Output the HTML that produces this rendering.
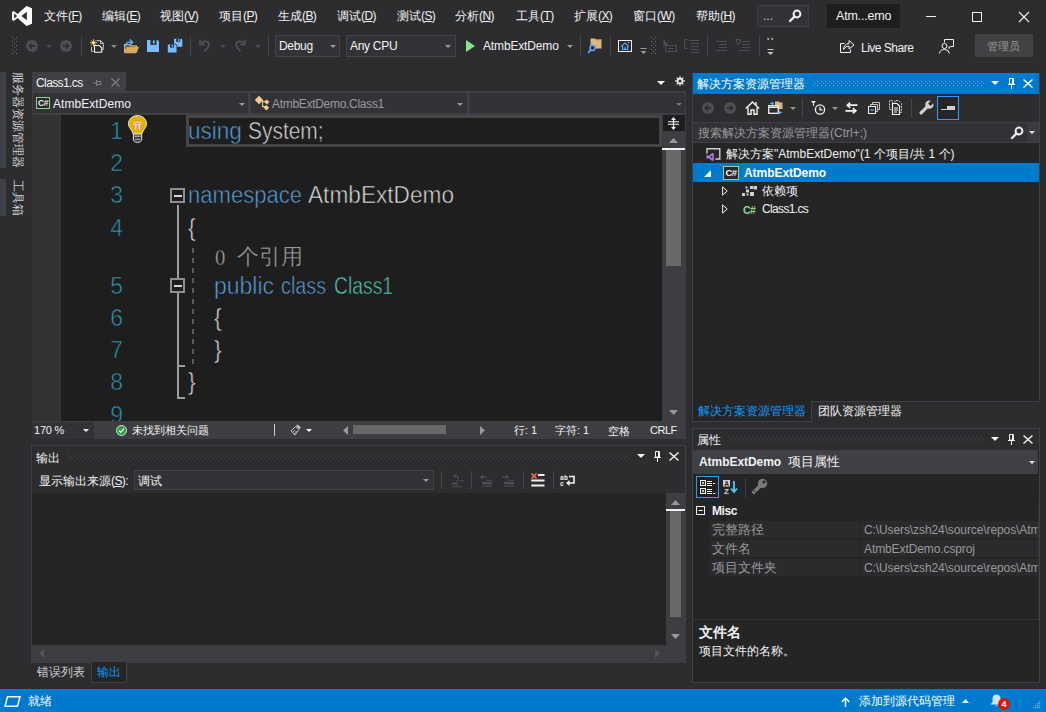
<!DOCTYPE html>
<html lang="zh">
<head>
<meta charset="utf-8">
<title>AtmbExtDemo - Microsoft Visual Studio</title>
<style>
*{box-sizing:border-box;margin:0;padding:0}
html,body{width:1046px;height:712px;overflow:hidden;background:#2d2d30}
body{position:relative;font-family:"Liberation Sans",sans-serif;font-size:12px;color:#f1f1f1;line-height:1}
.a{position:absolute}
.t{position:absolute;white-space:nowrap;line-height:16px;height:16px}
.ls{letter-spacing:-0.3px}
.cj{display:inline-block;white-space:nowrap;overflow:visible}
.mp{letter-spacing:-0.6px}
.u{text-decoration:underline;text-underline-offset:1px}
svg{position:absolute;overflow:visible}
.dots{background:conic-gradient(at 1px 1px,transparent 75%,#6a6a6e 0) 0 0/4px 4px,conic-gradient(at 1px 1px,transparent 75%,#6a6a6e 0) 2px 2px/4px 4px}
.dotsd{background:conic-gradient(at 1px 1px,transparent 75%,#4b4b50 0) 0 0/4px 4px,conic-gradient(at 1px 1px,transparent 75%,#4b4b50 0) 2px 2px/4px 4px}
.dotsb{background:conic-gradient(at 1px 1px,transparent 75%,#5eaee3 0) 0 0/4px 4px,conic-gradient(at 1px 1px,transparent 75%,#5eaee3 0) 2px 2px/4px 4px}
.code{position:absolute;white-space:nowrap;font-size:23px;line-height:32px;height:32px;color:#dcdcdc;transform-origin:0 50%;-webkit-text-stroke:0.55px #1e1e1e}
.ln{position:absolute;font-size:23px;line-height:32px;height:32px;color:#2b91af;width:30px;text-align:right;-webkit-text-stroke:0.55px #1e1e1e}
.kw{color:#569cd6}.ty{color:#4ec9b0}
</style>
</head>
<body>

<!-- ===== TITLE / MENU BAR ===== -->
<div id="menubar" class="a" style="left:0;top:0;width:1046px;height:30px">
<!-- VS logo -->
<svg style="left:12px;top:6px" width="20" height="20" viewBox="0 0 20 20"><path fill="#fff" fill-rule="evenodd" d="M14.6 0 L20 2.3 V17.7 L14.6 20 L5.4 11.9 L1.8 14.9 L0 13.9 V6.1 L1.8 5.1 L5.4 8.1 Z M14.8 5.8 L9.4 10 L14.8 14.2 Z M2.1 7.3 V12.7 L5 10 Z"/></svg>
<span class="t" style="left:44px;top:8px"><span class="cj" style="width:24px">文件</span><span class="mp">(<span class="u">F</span>)</span></span>
<span class="t" style="left:102px;top:8px"><span class="cj" style="width:24px">编辑</span><span class="mp">(<span class="u">E</span>)</span></span>
<span class="t" style="left:160px;top:8px"><span class="cj" style="width:24px">视图</span><span class="mp">(<span class="u">V</span>)</span></span>
<span class="t" style="left:219px;top:8px"><span class="cj" style="width:24px">项目</span><span class="mp">(<span class="u">P</span>)</span></span>
<span class="t" style="left:278px;top:8px"><span class="cj" style="width:24px">生成</span><span class="mp">(<span class="u">B</span>)</span></span>
<span class="t" style="left:337px;top:8px"><span class="cj" style="width:24px">调试</span><span class="mp">(<span class="u">D</span>)</span></span>
<span class="t" style="left:397px;top:8px"><span class="cj" style="width:24px">测试</span><span class="mp">(<span class="u">S</span>)</span></span>
<span class="t" style="left:455px;top:8px"><span class="cj" style="width:24px">分析</span><span class="mp">(<span class="u">N</span>)</span></span>
<span class="t" style="left:516px;top:8px"><span class="cj" style="width:24px">工具</span><span class="mp">(<span class="u">T</span>)</span></span>
<span class="t" style="left:574px;top:8px"><span class="cj" style="width:24px">扩展</span><span class="mp">(<span class="u">X</span>)</span></span>
<span class="t" style="left:633px;top:8px"><span class="cj" style="width:24px">窗口</span><span class="mp">(<span class="u">W</span>)</span></span>
<span class="t" style="left:696px;top:8px"><span class="cj" style="width:24px">帮助</span><span class="mp">(<span class="u">H</span>)</span></span>
<!-- search box -->
<div class="a" style="left:757px;top:5px;width:52px;height:22px;background:#333337;border:1px solid #3f3f46"></div>
<span class="t" style="left:763px;top:8px;color:#c8c8c8">...</span>
<svg style="left:789px;top:9px" width="13" height="13" viewBox="0 0 13 13"><circle cx="8" cy="5" r="3.4" fill="none" stroke="#f1f1f1" stroke-width="2"/><path d="M5.4 7.6 L1 12" stroke="#f1f1f1" stroke-width="2.4" stroke-linecap="round"/></svg>
<!-- title label -->
<div class="a" style="left:827px;top:4px;width:73px;height:24px;background:#1e1e1e"></div>
<span class="t" style="left:836px;top:8px;font-size:12.5px;letter-spacing:-0.2px">Atm...emo</span>
<!-- window buttons -->
<div class="a" style="left:926px;top:16px;width:10px;height:1px;background:#f1f1f1"></div>
<div class="a" style="left:972px;top:12px;width:10px;height:10px;border:1px solid #f1f1f1"></div>
<svg style="left:1019px;top:12px" width="10" height="10" viewBox="0 0 10 10"><path d="M0 0 L10 10 M10 0 L0 10" stroke="#f1f1f1" stroke-width="1.1"/></svg>
</div>

<!-- ===== TOOLBAR ===== -->
<div id="toolbar" class="a" style="left:0;top:30px;width:1046px;height:32px">
<!-- grip -->
<div class="a dots" style="left:12px;top:7px;width:5px;height:17px"></div>
<!-- back / forward (disabled) -->
<svg style="left:26px;top:10px" width="12" height="12" viewBox="0 0 12 12"><circle cx="6" cy="6" r="6" fill="#4d4d52"/><path d="M9 6 H3.6 M5.8 3.6 L3.4 6 L5.8 8.4" stroke="#2d2d30" stroke-width="1.5" fill="none"/></svg>
<svg style="left:46px;top:15px" width="6" height="3" viewBox="0 0 6 3"><path d="M0 0 H6 L3 3 Z" fill="#4d4d52"/></svg>
<svg style="left:60px;top:10px" width="12" height="12" viewBox="0 0 12 12"><circle cx="6" cy="6" r="6" fill="#4d4d52"/><path d="M3 6 H8.4 M6.2 3.6 L8.6 6 L6.2 8.4" stroke="#2d2d30" stroke-width="1.5" fill="none"/></svg>
<div class="a" style="left:81px;top:6px;width:1px;height:20px;background:#46464a"></div>
<!-- new project -->
<svg style="left:89px;top:8px" width="16" height="16" viewBox="0 0 16 16"><path d="M7.5 2.7 H11.8 L14.3 5.2 V11.5 H13" fill="none" stroke="#c8c8c8" stroke-width="1"/><path d="M11.6 2.9 V5.4 H14.1" fill="none" stroke="#c8c8c8" stroke-width="1"/><path d="M5.5 7.5 H10.4 L12.7 9.8 V14.3 H5.5 Z" fill="#2d2d30" stroke="#f1f1f1" stroke-width="1.1"/><path d="M2.5 8.7 V13.4 H4.3" fill="none" stroke="#c8c8c8" stroke-width="1"/><path d="M4.5 1.2 V8.4 M0.9 4.8 H8.1 M2 2.3 L7 7.3 M7 2.3 L2 7.3" stroke="#f0b45a" stroke-width="1"/><circle cx="4.5" cy="4.8" r="1.3" fill="#fff3d6"/></svg>
<svg style="left:111px;top:15px" width="6" height="3" viewBox="0 0 6 3"><path d="M0 0 H6 L3 3 Z" fill="#8a8a8a"/></svg>
<!-- open -->
<svg style="left:124px;top:8px" width="15" height="16" viewBox="0 0 15 16"><path d="M0.6 14.5 V6.6 H4.8 L6 7.8 H12.4 V9.2" fill="none" stroke="#e0b36a" stroke-width="1.2"/><path d="M2.6 9.2 H14.4 L12.2 14.8 H0.5 Z" fill="#d9a85a" stroke="#e6bc78" stroke-width="0.8"/><path d="M1.9 8.6 Q1.4 4.3 5.2 4.3 H8" fill="none" stroke="#55aaff" stroke-width="1.6"/><path d="M5.8 1.5 L8.6 4.3 L5.8 7.1" fill="none" stroke="#55aaff" stroke-width="1.6"/></svg>
<!-- save -->
<svg style="left:147px;top:10px" width="12" height="12" viewBox="0 0 12 12"><path d="M0 0 H10.6 L12 1.4 V12 H0 Z" fill="#75beff"/><rect x="3.5" y="0" width="6" height="4.8" fill="#2d2d30"/><rect x="5.9" y="0.5" width="1.8" height="3" fill="#75beff"/></svg>
<!-- save all -->
<svg style="left:167px;top:8px" width="16" height="15" viewBox="0 0 16 15"><path d="M7 0.8 H14.3 L15.3 1.8 V8.7 H7 Z" fill="#75beff"/><rect x="9.2" y="0.8" width="4" height="3" fill="#2d2d30"/><rect x="11" y="1.2" width="1.2" height="1.9" fill="#75beff"/><path d="M0.8 6.6 H8.5 L9.5 7.6 V14.5 H0.8 Z" fill="#75beff" stroke="#2d2d30" stroke-width="1.6" paint-order="stroke"/><rect x="3" y="6.6" width="4" height="3" fill="#2d2d30"/><rect x="4.8" y="7" width="1.2" height="1.9" fill="#75beff"/></svg>
<div class="a" style="left:190px;top:6px;width:1px;height:20px;background:#46464a"></div>
<!-- undo / redo (disabled) -->
<svg style="left:199px;top:9px" width="12" height="13" viewBox="0 0 12 13"><path d="M1 0.5 V5.5 H6" fill="none" stroke="#4d4d52" stroke-width="1.8"/><path d="M1.5 5 Q5 0.8 8.6 3 Q11.5 5.5 8.5 9 L5.5 12.3" fill="none" stroke="#4d4d52" stroke-width="1.9"/></svg>
<svg style="left:220px;top:15px" width="6" height="3" viewBox="0 0 6 3"><path d="M0 0 H6 L3 3 Z" fill="#4d4d52"/></svg>
<svg style="left:234px;top:9px" width="12" height="13" viewBox="0 0 12 13"><path d="M11 0.5 V5.5 H6" fill="none" stroke="#4d4d52" stroke-width="1.8"/><path d="M10.5 5 Q7 0.8 3.4 3 Q0.5 5.5 3.5 9 L6.5 12.3" fill="none" stroke="#4d4d52" stroke-width="1.9"/></svg>
<svg style="left:255px;top:15px" width="6" height="3" viewBox="0 0 6 3"><path d="M0 0 H6 L3 3 Z" fill="#4d4d52"/></svg>
<div class="a" style="left:268px;top:6px;width:1px;height:20px;background:#46464a"></div>
<!-- Debug combo -->
<div class="a" style="left:275px;top:5px;width:65px;height:22px;background:#333337;border:1px solid #434346"></div>
<span class="t ls" style="left:279px;top:8px">Debug</span>
<svg style="left:330px;top:15px" width="6" height="3" viewBox="0 0 6 3"><path d="M0 0 H6 L3 3 Z" fill="#999"/></svg>
<!-- Any CPU combo -->
<div class="a" style="left:346px;top:5px;width:110px;height:22px;background:#333337;border:1px solid #434346"></div>
<span class="t ls" style="left:350px;top:8px">Any CPU</span>
<svg style="left:445px;top:15px" width="6" height="3" viewBox="0 0 6 3"><path d="M0 0 H6 L3 3 Z" fill="#999"/></svg>
<!-- start -->
<svg style="left:466px;top:10px" width="9" height="12" viewBox="0 0 9 12"><path d="M0 0 L9 6 L0 12 Z" fill="#8ae28a"/></svg>
<span class="t" style="left:483px;top:8px;letter-spacing:-0.15px">AtmbExtDemo</span>
<svg style="left:567px;top:15px" width="6" height="3" viewBox="0 0 6 3"><path d="M0 0 H6 L3 3 Z" fill="#999"/></svg>
<div class="a" style="left:580px;top:6px;width:1px;height:20px;background:#46464a"></div>
<!-- find in files -->
<svg style="left:587px;top:7px" width="15" height="16" viewBox="0 0 15 16"><path d="M3.5 1.5 H8 L9 2.5 H14.5 V11.5 H3.5 Z" fill="#dcb67a"/><path d="M9 2.8 H14.5" stroke="#b89455" stroke-width="0.8"/><circle cx="5.6" cy="10.8" r="2.6" fill="#2d2d30" stroke="#55aaff" stroke-width="1.5"/><path d="M3.7 12.8 L1.5 15.3" stroke="#55aaff" stroke-width="1.8" stroke-linecap="round"/></svg>
<div class="a" style="left:610px;top:6px;width:1px;height:20px;background:#46464a"></div>
<!-- window icon -->
<svg style="left:618px;top:10px" width="14" height="12" viewBox="0 0 14 12"><rect x="0.5" y="0.5" width="13" height="11" fill="none" stroke="#f1f1f1" stroke-width="1"/><path d="M3.2 6.4 L7 3 L10.8 6.4 M4.5 6 V9.5 H9.5 V6" fill="none" stroke="#55aaff" stroke-width="1.2"/><rect x="6.3" y="7.2" width="1.5" height="2.3" fill="#55aaff"/><path d="M10 2.5 H12" stroke="#f1f1f1" stroke-width="1" stroke-dasharray="1 1"/></svg>
<svg style="left:640px;top:18px" width="7" height="7" viewBox="0 0 7 7"><path d="M0.5 0.5 H6.5" stroke="#999" stroke-width="1"/><path d="M0.5 3 H6.5 L3.5 6 Z" fill="#999"/></svg>
<!-- grip -->
<div class="a dots" style="left:651px;top:7px;width:5px;height:17px"></div>
<!-- disabled icons -->
<svg style="left:663px;top:9px" width="14" height="14" viewBox="0 0 14 14"><path d="M0.5 0.5 L0.5 7.5 L2.5 5.8 L4 8.5 L5 8 L3.6 5.4 H6 Z" fill="#4d4d52"/><rect x="2.5" y="6.5" width="11" height="6" fill="#2d2d30" stroke="#4d4d52" stroke-width="1"/><path d="M5 9.5 H11" stroke="#4d4d52" stroke-width="1"/></svg>
<svg style="left:684px;top:9px" width="15" height="14" viewBox="0 0 15 14"><path d="M3.5 0.5 H0.5 V9.5 H3.5" fill="none" stroke="#4d4d52" stroke-width="1"/><path d="M5 1.5 H15 M7 4.5 H15 M7 7.5 H15 M7 10.5 H15 M7 13.5 H15" stroke="#4d4d52" stroke-width="1"/></svg>
<div class="a" style="left:707px;top:6px;width:1px;height:20px;background:#46464a"></div>
<svg style="left:716px;top:11px" width="11" height="10" viewBox="0 0 11 10"><path d="M0 0.5 H11 M3 3.5 H11 M3 6.5 H11 M0 9.5 H11" stroke="#4d4d52" stroke-width="1"/></svg>
<svg style="left:736px;top:9px" width="14" height="12" viewBox="0 0 14 12"><path d="M0.5 3.5 V0.5 H3 Q4.5 0.5 4.5 2 Q4.5 3.5 2.5 4.5 L1 6" fill="none" stroke="#4d4d52" stroke-width="1.2"/><path d="M6 2.5 H14 M6 5.5 H14 M6 8.5 H14 M3 11.5 H14" stroke="#4d4d52" stroke-width="1"/></svg>
<div class="a" style="left:759px;top:6px;width:1px;height:20px;background:#46464a"></div>
<!-- overflow -->
<svg style="left:767px;top:7px" width="8" height="18" viewBox="0 0 8 18"><path d="M0.5 0.5 L2.5 2 L0.5 3.5 Z M4.5 0.5 L6.5 2 L4.5 3.5 Z" fill="#c8c8c8"/><path d="M0.5 12.5 H6.5" stroke="#c8c8c8" stroke-width="1"/><path d="M0.5 15 H6.5 L3.5 18 Z" fill="#c8c8c8"/></svg>
<!-- live share -->
<svg style="left:840px;top:9px" width="15" height="14" viewBox="0 0 15 14"><path d="M4.5 4.5 H0.5 V13.5 H10.5 V10.5" fill="none" stroke="#f1f1f1" stroke-width="1"/><path d="M3.5 10.5 Q4 5 9 4.5 V1.5 L14 6 L9 10 V7 Q5.5 7 3.5 10.5 Z" fill="none" stroke="#f1f1f1" stroke-width="1" stroke-linejoin="round"/></svg>
<span class="t" style="left:861px;top:10px;letter-spacing:-0.5px">Live Share</span>
<!-- feedback -->
<svg style="left:939px;top:9px" width="15" height="15" viewBox="0 0 15 15"><path d="M5.5 3.5 V0.5 H14.5 V7.5 H11.5 L10 9.5 V7.5" fill="none" stroke="#f1f1f1" stroke-width="1"/><circle cx="5.5" cy="7" r="2.5" fill="none" stroke="#f1f1f1" stroke-width="1"/><path d="M0.5 14.5 Q0.8 10.5 5.5 10.5 Q10 10.5 10.5 14.5" fill="none" stroke="#f1f1f1" stroke-width="1"/></svg>
<!-- admin -->
<div class="a" style="left:975px;top:4px;width:58px;height:23px;background:#424245"></div>
<span class="t" style="left:987px;top:8px;color:#999;font-size:11px">管理员</span>
</div>

<!-- ===== LEFT AUTOHIDE STRIP ===== -->
<div id="leftstrip" class="a" style="left:0;top:72px;width:28px;height:612px">
<div class="a" style="left:0;top:0;width:6px;height:96px;background:#3f3f46"></div>
<div class="a" style="left:0;top:107px;width:6px;height:37px;background:#3f3f46"></div>
<span class="t" style="left:26px;top:0;transform-origin:0 0;transform:rotate(90deg);color:#d0d0d0">服务器资源管理器</span>
<span class="t" style="left:26px;top:108px;transform-origin:0 0;transform:rotate(90deg);color:#d0d0d0">工具箱</span>
</div>

<!-- ===== EDITOR GROUP ===== -->
<div id="editor" class="a" style="left:32px;top:72px;width:654px;height:368px">
<!-- tab -->
<div class="a" style="left:0;top:0;width:94px;height:20px;background:#3f3f46"></div>
<span class="t" style="left:4px;top:3px;letter-spacing:-0.6px">Class1.cs</span>
<svg style="left:61px;top:7px" width="9" height="8" viewBox="0 0 9 8"><path d="M0 4 H3.5 M3.5 1 V7 M3.5 2.5 H8 V5.5 H3.5" fill="none" stroke="#7d7d82" stroke-width="1"/></svg>
<svg style="left:79px;top:6px" width="9" height="9" viewBox="0 0 9 9"><path d="M0.5 0.5 L8.5 8.5 M8.5 0.5 L0.5 8.5" stroke="#7d7d82" stroke-width="1.2"/></svg>
<svg style="left:625px;top:9px" width="8" height="4" viewBox="0 0 8 4"><path d="M0 0 H8 L4 4 Z" fill="#f1f1f1"/></svg>
<svg style="left:643px;top:4px" width="10" height="10" viewBox="0 0 11 11"><g fill="none" stroke="#f1f1f1"><circle cx="5.5" cy="5.5" r="2.6" stroke-width="1.7"/><path d="M5.5 0.3 V2.2 M5.5 8.8 V10.7 M0.3 5.5 H2.2 M8.8 5.5 H10.7 M1.8 1.8 L3.1 3.1 M7.9 7.9 L9.2 9.2 M1.8 9.2 L3.1 7.9 M7.9 3.1 L9.2 1.8" stroke-width="1.5"/></g></svg>
<!-- nav bar -->
<div class="a" style="left:0;top:19px;width:654px;height:24px;background:#3f3f46"></div>
<div class="a" style="left:1px;top:21px;width:215px;height:20px;background:#333337"></div>
<div class="a" style="left:219px;top:21px;width:216px;height:20px;background:#333337"></div>
<div class="a" style="left:438px;top:21px;width:215px;height:20px;background:#333337"></div>
<svg style="left:4px;top:25px" width="14" height="12" viewBox="0 0 14 12"><rect x="0.5" y="0.5" width="13" height="11" fill="#2b2b2e" stroke="#8fd18f" stroke-width="1"/><text x="7" y="9.2" font-family="Liberation Sans" font-size="8.5" font-weight="bold" fill="#e8e8e8" text-anchor="middle" letter-spacing="-0.5">C#</text></svg>
<span class="t" style="left:21px;top:24px;letter-spacing:0.05px">AtmbExtDemo</span>
<svg style="left:207px;top:31px" width="6" height="3" viewBox="0 0 6 3"><path d="M0 0 H6 L3 3 Z" fill="#999"/></svg>
<svg style="left:222px;top:23px" width="16" height="16" viewBox="0 0 16 16"><path d="M8 6.2 H11.5 M8.6 6 V11.6 H11" fill="none" stroke="#f5cd8b" stroke-width="1.1"/><path d="M5 0.8 L9.2 5 L5 9.2 L0.8 5 Z" fill="#f5cd8b"/><path d="M12.8 4.4 L15.4 7 L12.8 9.6 L10.2 7 Z" fill="#f5cd8b"/><path d="M12.4 10 L15.1 12.7 L12.4 15.4 L9.7 12.7 Z" fill="#f5cd8b"/></svg>
<span class="t ls" style="left:240px;top:24px;color:#9b9b9b">AtmbExtDemo.Class1</span>
<svg style="left:425px;top:31px" width="6" height="3" viewBox="0 0 6 3"><path d="M0 0 H6 L3 3 Z" fill="#999"/></svg>
<svg style="left:644px;top:31px" width="6" height="3" viewBox="0 0 6 3"><path d="M0 0 H6 L3 3 Z" fill="#777"/></svg>
<!-- text area -->
<div class="a" style="left:0;top:43px;width:630px;height:306px;background:#1e1e1e;overflow:hidden">
 <div class="a" style="left:0;top:0;width:29px;height:306px;background:#333333"></div>
 <!-- current line -->
 <div class="a" style="left:154px;top:0;width:476px;height:32px;border:3px solid #464646"></div>
 <!-- line numbers -->
 <span class="ln" style="left:61px;top:0px">1</span>
 <span class="ln" style="left:61px;top:32px">2</span>
 <span class="ln" style="left:61px;top:64px">3</span>
 <span class="ln" style="left:61px;top:97px">4</span>
 <span class="ln" style="left:61px;top:155px">5</span>
 <span class="ln" style="left:61px;top:187px">6</span>
 <span class="ln" style="left:61px;top:219px">7</span>
 <span class="ln" style="left:61px;top:251px">8</span>
 <span class="ln" style="left:61px;top:284px">9</span>
 <!-- lightbulb -->
 <svg style="left:96px;top:0px" width="19" height="28" viewBox="0 0 19 28"><path d="M5.4 18.8 H13.7 V24 Q13.7 27.3 9.5 27.3 Q5.4 27.3 5.4 24 Z" fill="#3c3c3c" stroke="#e8e8e8" stroke-width="1"/><path d="M6.4 21.3 H12.7 M7 24.4 H12.1" stroke="#a0a0a0" stroke-width="1.4"/><path d="M9.5 0.6 C15 0.6 18.5 4.5 18.5 8.8 C18.5 12.8 15 14.6 13.9 18.8 H5.1 C4 14.6 0.5 12.8 0.5 8.8 C0.5 4.5 4 0.6 9.5 0.6 Z" fill="#e5b000" stroke="#e8e8e8" stroke-width="1"/><ellipse cx="9.5" cy="8.4" rx="4.1" ry="1.3" fill="none" stroke="#e4e4ec" stroke-width="1"/><path d="M7.7 9.6 V14.8 M11.3 9.6 V14.8" stroke="#e4e4ec" stroke-width="1.2"/></svg>
 <!-- outlining -->
 <div class="a" style="left:145px;top:90px;width:2px;height:193px;background:#9d9d9d"></div>
 <div class="a" style="left:145px;top:250px;width:8px;height:2px;background:#9d9d9d"></div>
 <div class="a" style="left:145px;top:282px;width:8px;height:2px;background:#9d9d9d"></div>
 <div class="a" style="left:138px;top:73px;width:15px;height:15px;border:2px solid #8e8e8e;background:#1e1e1e"></div>
 <div class="a" style="left:142px;top:80px;width:8px;height:2px;background:#d4d4d4"></div>
 <div class="a" style="left:138px;top:163px;width:15px;height:15px;border:2px solid #8e8e8e;background:#1e1e1e"></div>
 <div class="a" style="left:142px;top:170px;width:8px;height:2px;background:#d4d4d4"></div>
 <div class="a" style="left:160px;top:133px;width:2px;height:117px;background:repeating-linear-gradient(180deg,#5a5a5a 0,#5a5a5a 5px,transparent 5px,transparent 10.1px)"></div>
 <!-- code -->
 <span class="code kw" style="left:156px;top:0px;transform:scaleX(0.98)">using</span>
 <span class="code" style="left:216px;top:0px;transform:scaleX(0.91)">System;</span>
 <span class="code kw" style="left:156px;top:64px;transform:scaleX(0.96)">namespace</span>
 <span class="code" style="left:276px;top:64px;transform:scaleX(0.985)">AtmbExtDemo</span>
 <span class="code" style="left:156px;top:97px">{</span>
 <span class="code" style="left:183px;top:127px;font-size:23px;color:#9a9a9a;font-family:'Liberation Serif',serif;transform:scaleX(0.9);-webkit-text-stroke:0.3px #1e1e1e">0</span>
 <span class="code" style="left:205px;top:126px;font-size:21.5px;color:#9a9a9a;-webkit-text-stroke:0.3px #1e1e1e">个引用</span>
 <span class="code kw" style="left:182px;top:155px;transform:scaleX(1)">public</span>
 <span class="code kw" style="left:249px;top:155px;transform:scaleX(0.86)">class</span>
 <span class="code ty" style="left:302px;top:155px;transform:scaleX(0.84)">Class1</span>
 <span class="code" style="left:182px;top:187px">{</span>
 <span class="code" style="left:182px;top:219px">}</span>
 <span class="code" style="left:156px;top:251px">}</span>
</div>
<!-- vertical scrollbar -->
<div class="a" style="left:630px;top:43px;width:24px;height:306px;background:#3e3e42"></div>
<div class="a" style="left:631px;top:43px;width:22px;height:16px;background:#1e1e1e"></div>
<svg style="left:636px;top:45px" width="11" height="13" viewBox="0 0 11 13"><path d="M0 4.8 H11 M0 7.2 H11" stroke="#f1f1f1" stroke-width="1.1"/><path d="M5.5 0.5 V12.5" stroke="#f1f1f1" stroke-width="1.2"/><path d="M3 3 L5.5 0.2 L8 3 Z M3 10 L5.5 12.8 L8 10 Z" fill="#f1f1f1"/></svg>
<svg style="left:637px;top:66px" width="9" height="5" viewBox="0 0 9 5"><path d="M0 5 H9 L4.5 0 Z" fill="#999"/></svg>
<div class="a" style="left:630px;top:76px;width:23px;height:2px;background:#f1f1f1"></div>
<div class="a" style="left:634px;top:78px;width:15px;height:116px;background:#686868"></div>
<svg style="left:637px;top:338px" width="9" height="5" viewBox="0 0 9 5"><path d="M0 0 H9 L4.5 5 Z" fill="#999"/></svg>
<!-- bottom info bar -->
<div class="a" style="left:0;top:349px;width:654px;height:18px;background:#3e3e42"></div>
<div class="a" style="left:0;top:350px;width:62px;height:17px;background:#333337"></div>
<span class="t" style="left:2px;top:350px;font-size:11px;letter-spacing:-0.2px">170 %</span>
<svg style="left:51px;top:357px" width="6" height="3" viewBox="0 0 6 3"><path d="M0 0 H6 L3 3 Z" fill="#f1f1f1"/></svg>
<svg style="left:84px;top:353px" width="11" height="11" viewBox="0 0 11 11"><circle cx="5.5" cy="5.5" r="5" fill="#2f9e44" stroke="#cfe8d3" stroke-width="1"/><path d="M3 5.6 L4.8 7.4 L8 3.6" fill="none" stroke="#fff" stroke-width="1.3"/></svg>
<span class="t" style="left:100px;top:350px;font-size:11px">未找到相关问题</span>
<div class="a" style="left:242px;top:352px;width:1px;height:12px;background:#d0d0d0"></div>
<svg style="left:258px;top:352px" width="12" height="12" viewBox="0 0 12 12"><path d="M7.5 0.5 L11 3.5 L9.5 5 L6 2 Z" fill="#c8c8c8"/><path d="M5.5 2.5 L9 5.5 L5 11 L1 7 Z" fill="none" stroke="#c8c8c8" stroke-width="1"/><path d="M3 8 L5 6 M4.5 9.5 L6.5 7" stroke="#c8c8c8" stroke-width="0.8"/></svg>
<svg style="left:274px;top:357px" width="6" height="3" viewBox="0 0 6 3"><path d="M0 0 H6 L3 3 Z" fill="#f1f1f1"/></svg>
<svg style="left:311px;top:354px" width="5" height="9" viewBox="0 0 5 9"><path d="M5 0 V9 L0 4.5 Z" fill="#999"/></svg>
<div class="a" style="left:321px;top:353px;width:93px;height:9px;background:#686868"></div>
<svg style="left:448px;top:354px" width="5" height="9" viewBox="0 0 5 9"><path d="M0 0 V9 L5 4.5 Z" fill="#999"/></svg>
<span class="t" style="left:482px;top:350px;font-size:11px"><span class="cj" style="width:11px">行</span>: 1</span>
<span class="t" style="left:523px;top:350px;font-size:11px"><span class="cj" style="width:22px">字符</span>: 1</span>
<span class="t" style="left:576px;top:351px;font-size:11px">空格</span>
<span class="t" style="left:618px;top:350px;font-size:11px;letter-spacing:-0.5px">CRLF</span>
</div>

<!-- ===== OUTPUT PANEL ===== -->
<div id="output" class="a" style="left:32px;top:445px;width:654px;height:239px">
<div class="a" style="left:-1px;top:0;width:655px;height:218px;border:1px solid #3f3f46;border-bottom:0"></div>
<span class="t" style="left:4px;top:5px">输出</span>
<div class="a dotsd" style="left:36px;top:9px;width:561px;height:5px"></div>
<svg style="left:605px;top:9px" width="8" height="4" viewBox="0 0 8 4"><path d="M0 0 H8 L4 4 Z" fill="#f1f1f1"/></svg>
<svg style="left:622px;top:6px" width="7" height="11" viewBox="0 0 7 11"><path d="M1.5 0.5 H5.5 V6 H1.5 Z M4.5 0.5 V6" fill="none" stroke="#f1f1f1" stroke-width="1"/><path d="M0 6.5 H7 M3.5 6.5 V11" stroke="#f1f1f1" stroke-width="1"/></svg>
<svg style="left:637px;top:7px" width="10" height="9" viewBox="0 0 10 9"><path d="M0.5 0.5 L9.5 8.5 M9.5 0.5 L0.5 8.5" stroke="#f1f1f1" stroke-width="1.5"/></svg>
<!-- toolbar -->
<span class="t" style="left:7px;top:28px"><span class="cj" style="width:72px">显示输出来源</span><span class="mp">(<span class="u">S</span>):</span></span>
<div class="a" style="left:102px;top:25px;width:300px;height:20px;background:#333337;border:1px solid #434346"></div>
<span class="t" style="left:106px;top:28px">调试</span>
<svg style="left:391px;top:34px" width="6" height="3" viewBox="0 0 6 3"><path d="M0 0 H6 L3 3 Z" fill="#999"/></svg>
<div class="a" style="left:409px;top:26px;width:1px;height:18px;background:#46464a"></div>
<svg style="left:418px;top:28px" width="14" height="15" viewBox="0 0 14 15"><path d="M5.5 0.5 L2.5 3 L5.5 5.5 Z" fill="#4d4d52"/><path d="M4 3 H6 Q8 3 8 5 V6.5" fill="none" stroke="#4d4d52" stroke-width="1.2"/><path d="M6 7.8 H14" stroke="#4d4d52" stroke-width="1"/><rect x="2" y="9.4" width="5.5" height="2.4" fill="#4d4d52"/><path d="M2 13.7 H12" stroke="#4d4d52" stroke-width="1"/></svg>
<div class="a" style="left:439px;top:26px;width:1px;height:18px;background:#46464a"></div>
<svg style="left:447px;top:29px" width="14" height="13" viewBox="0 0 14 13"><path d="M4.2 0.4 L0.6 3 L4.2 5.6 Z" fill="#4d4d52"/><path d="M3 3 H8" stroke="#4d4d52" stroke-width="1.4"/><path d="M7 6.3 H13" stroke="#4d4d52" stroke-width="1"/><rect x="3" y="7.9" width="10" height="2.4" fill="#4d4d52"/><path d="M3 12 H13" stroke="#4d4d52" stroke-width="1"/></svg>
<svg style="left:469px;top:29px" width="14" height="13" viewBox="0 0 14 13"><path d="M4.8 0.4 L8.4 3 L4.8 5.6 Z" fill="#4d4d52"/><path d="M1 3 H6" stroke="#4d4d52" stroke-width="1.4"/><path d="M7 6.3 H13" stroke="#4d4d52" stroke-width="1"/><rect x="3" y="7.9" width="10" height="2.4" fill="#4d4d52"/><path d="M3 12 H13" stroke="#4d4d52" stroke-width="1"/></svg>
<div class="a" style="left:491px;top:26px;width:1px;height:18px;background:#46464a"></div>
<svg style="left:499px;top:28px" width="14" height="14" viewBox="0 0 14 14"><path d="M0.5 0.5 L5.5 5.5 M5.5 0.5 L0.5 5.5" stroke="#f06a5a" stroke-width="1.7"/><path d="M7 2 H13.5 M0.3 7.6 H13.5 M0.3 12.6 H13.5" stroke="#f1f1f1" stroke-width="2"/></svg>
<div class="a" style="left:521px;top:26px;width:1px;height:18px;background:#46464a"></div>
<svg style="left:528px;top:30px" width="16" height="12" viewBox="0 0 16 12"><text x="0" y="5" font-family="Liberation Mono" font-size="6.5" font-weight="bold" fill="#f1f1f1">ab</text><text x="0" y="11" font-family="Liberation Mono" font-size="6.5" font-weight="bold" fill="#f1f1f1">c</text><path d="M9 1.5 H14 V8 H8" fill="none" stroke="#f1f1f1" stroke-width="1.6"/><path d="M9.5 5 L6 8 L9.5 11 Z" fill="#f1f1f1"/></svg>
<!-- content -->
<div class="a" style="left:0;top:48px;width:634px;height:152px;background:#252526"></div>
<!-- v scroll -->
<div class="a" style="left:634px;top:48px;width:19px;height:152px;background:#3e3e42"></div>
<svg style="left:639px;top:55px" width="9" height="5" viewBox="0 0 9 5"><path d="M0 5 H9 L4.5 0 Z" fill="#999"/></svg>
<div class="a" style="left:634px;top:64px;width:19px;height:2px;background:#f1f1f1"></div>
<div class="a" style="left:638px;top:66px;width:11px;height:106px;background:#686868"></div>
<svg style="left:639px;top:189px" width="9" height="5" viewBox="0 0 9 5"><path d="M0 0 H9 L4.5 5 Z" fill="#999"/></svg>
<!-- h scroll -->
<div class="a" style="left:0;top:200px;width:653px;height:18px;background:#3e3e42"></div>
<svg style="left:7px;top:204px" width="5" height="9" viewBox="0 0 5 9"><path d="M5 0 V9 L0 4.5 Z" fill="#555558"/></svg>
<svg style="left:623px;top:204px" width="5" height="9" viewBox="0 0 5 9"><path d="M0 0 V9 L5 4.5 Z" fill="#555558"/></svg>
<!-- bottom tabs -->
<span class="t" style="left:5px;top:219px;color:#d0d0d0">错误列表</span>
<div class="a" style="left:59px;top:217px;width:36px;height:21px;background:#252526;border:1px solid #3f3f46;border-top:0"></div>
<span class="t" style="left:65px;top:219px;color:#0e97fb">输出</span>
</div>

<!-- ===== SOLUTION EXPLORER ===== -->
<div id="solexp" class="a" style="left:692px;top:73px;width:348px;height:349px">
<div class="a" style="left:0;top:0;width:348px;height:329px;background:#252526;border:1px solid #3f3f46"></div>
<!-- title -->
<div class="a" style="left:1px;top:0;width:346px;height:21px;background:#007acc"></div>
<span class="t" style="left:5px;top:3px;color:#fff">解决方案资源管理器</span>
<div class="a dotsb" style="left:121px;top:8px;width:171px;height:5px"></div>
<svg style="left:299px;top:8px" width="8" height="4" viewBox="0 0 8 4"><path d="M0 0 H8 L4 4 Z" fill="#fff"/></svg>
<svg style="left:316px;top:5px" width="7" height="11" viewBox="0 0 7 11"><path d="M1.5 0.5 H5.5 V6 H1.5 Z M4.5 0.5 V6" fill="none" stroke="#fff" stroke-width="1"/><path d="M0 6.5 H7 M3.5 6.5 V11" stroke="#fff" stroke-width="1"/></svg>
<svg style="left:331px;top:6px" width="10" height="9" viewBox="0 0 10 9"><path d="M0.5 0.5 L9.5 8.5 M9.5 0.5 L0.5 8.5" stroke="#fff" stroke-width="1.5"/></svg>
<!-- toolbar -->
<div class="a" style="left:1px;top:21px;width:346px;height:28px;background:#2d2d30"></div>
<svg style="left:10px;top:29px" width="12" height="12" viewBox="0 0 12 12"><circle cx="6" cy="6" r="6" fill="#4d4d52"/><path d="M9 6 H3.6 M5.8 3.6 L3.4 6 L5.8 8.4" stroke="#2d2d30" stroke-width="1.5" fill="none"/></svg>
<svg style="left:32px;top:29px" width="12" height="12" viewBox="0 0 12 12"><circle cx="6" cy="6" r="6" fill="#4d4d52"/><path d="M3 6 H8.4 M6.2 3.6 L8.6 6 L6.2 8.4" stroke="#2d2d30" stroke-width="1.5" fill="none"/></svg>
<svg style="left:53px;top:28px" width="15" height="14" viewBox="0 0 15 14"><path d="M0.8 7.5 L7.5 1 L14.2 7.5" fill="none" stroke="#f1f1f1" stroke-width="1.5"/><path d="M3 6.5 V13.3 H6 V9 H9 V13.3 H12 V6.5" fill="none" stroke="#f1f1f1" stroke-width="1.4"/><path d="M11 1 V4" stroke="#f1f1f1" stroke-width="1.4"/></svg>
<svg style="left:76px;top:28px" width="15" height="14" viewBox="0 0 15 14"><path d="M7 0.5 H11 L12 1.5 H14.5 V8 H7 Z" fill="#dcb67a"/><rect x="0.7" y="4.7" width="9.6" height="7.6" fill="#2d2d30" stroke="#f1f1f1" stroke-width="1.3"/><path d="M0.7 6.3 H10.3" stroke="#f1f1f1" stroke-width="1.4"/><path d="M2 2.5 H5 M3.8 1 L5.3 2.5 L3.8 4" fill="none" stroke="#55aaff" stroke-width="1.1"/><path d="M14 11.5 H11 M12.2 10 L10.7 11.5 L12.2 13" fill="none" stroke="#55aaff" stroke-width="1.1"/></svg>
<svg style="left:98px;top:34px" width="6" height="3" viewBox="0 0 6 3"><path d="M0 0 H6 L3 3 Z" fill="#999"/></svg>
<div class="a" style="left:110px;top:25px;width:1px;height:20px;background:#46464a"></div>
<svg style="left:119px;top:28px" width="15" height="14" viewBox="0 0 15 14"><path d="M0 0 H5 L2.5 3 Z" fill="#f1f1f1"/><path d="M2.5 2.5 V5" stroke="#f1f1f1" stroke-width="1"/><circle cx="9" cy="8.5" r="4.6" fill="none" stroke="#f1f1f1" stroke-width="1.3"/><path d="M9 5.8 V8.8 H11.5" fill="none" stroke="#f1f1f1" stroke-width="1.2"/></svg>
<svg style="left:140px;top:34px" width="6" height="3" viewBox="0 0 6 3"><path d="M0 0 H6 L3 3 Z" fill="#999"/></svg>
<svg style="left:153px;top:29px" width="13" height="12" viewBox="0 0 13 12"><path d="M12.5 3.2 H2.5 M5.2 0.6 L2.2 3.2 L5.2 5.8" fill="none" stroke="#f1f1f1" stroke-width="1.7"/><path d="M0.5 8.8 H10.5 M7.8 6.2 L10.8 8.8 L7.8 11.4" fill="none" stroke="#f1f1f1" stroke-width="1.7"/></svg>
<svg style="left:176px;top:29px" width="12" height="12" viewBox="0 0 12 12"><path d="M4.5 2.5 V0.5 H11.5 V7.5 H9.5" fill="none" stroke="#c8c8c8" stroke-width="1"/><path d="M2.5 4.5 V2.5 H9.5 V9.5 H7.5" fill="none" stroke="#c8c8c8" stroke-width="1"/><rect x="0.5" y="4.5" width="7" height="7" fill="none" stroke="#f1f1f1" stroke-width="1"/><path d="M2.2 8 H5.8" stroke="#55aaff" stroke-width="1.4"/></svg>
<svg style="left:197px;top:27px" width="15" height="15" viewBox="0 0 15 15"><path d="M3.5 3.5 V0.5 H0.5 V9.5 H3" fill="none" stroke="#c8c8c8" stroke-width="1" stroke-dasharray="2 1"/><path d="M6 2.5 V0.5 H9.5 L12.5 3.5 V12.5 H11" fill="none" stroke="#c8c8c8" stroke-width="1" stroke-dasharray="2 1"/><path d="M3.5 3.5 H8 L10.5 6 V14.5 H3.5 Z" fill="none" stroke="#f1f1f1" stroke-width="1.2"/><path d="M5 8 H9 M5 10 H9 M5 12 H8" stroke="#f1f1f1" stroke-width="1"/></svg>
<div class="a" style="left:219px;top:25px;width:1px;height:20px;background:#46464a"></div>
<svg style="left:227px;top:27px" width="15" height="15" viewBox="0 0 15 15"><path d="M14.3 3.2 L11.6 5.9 L9.1 3.4 L11.8 0.7 Q8.6 -0.2 6.8 2.2 Q5.6 4.2 6.5 6.2 L0.6 12.1 Q0 13.4 1 14.2 Q2 15 3 14.3 L8.8 8.5 Q11.2 9.4 13.2 7.8 Q15.2 5.8 14.3 3.2 Z" fill="#d0d0d0"/></svg>
<div class="a" style="left:245px;top:23px;width:22px;height:24px;background:#252526;border:1px solid #3399ff"></div>
<svg style="left:249px;top:32px" width="14" height="5" viewBox="0 0 14 5"><path d="M0 4.5 H14" stroke="#d0d0d0" stroke-width="1"/><rect x="6" y="1" width="8" height="3.5" fill="#d0d0d0"/></svg>
<!-- search -->
<div class="a" style="left:1px;top:49px;width:346px;height:21px;background:#333337;border-top:1px solid #3f3f46;border-bottom:1px solid #3f3f46"></div>
<div class="a" style="left:335px;top:50px;width:12px;height:19px;background:#3a3a3f"></div>
<span class="t" style="left:6px;top:52px;color:#999"><span class="cj" style="width:132px">搜索解决方案资源管理器</span>(Ctrl+;)</span>
<svg style="left:319px;top:53px" width="13" height="13" viewBox="0 0 13 13"><circle cx="8" cy="5" r="3.4" fill="none" stroke="#f1f1f1" stroke-width="2"/><path d="M5.4 7.6 L1 12" stroke="#f1f1f1" stroke-width="2.4" stroke-linecap="round"/></svg>
<svg style="left:337px;top:58px" width="6" height="3" viewBox="0 0 6 3"><path d="M0 0 H6 L3 3 Z" fill="#f1f1f1"/></svg>
<!-- tree -->
<svg style="left:14px;top:75px" width="15" height="14" viewBox="0 0 15 14"><path d="M1 5.5 V0.7 H13.8 V11 H9.5" fill="none" stroke="#d0d0d0" stroke-width="1.4"/><path d="M6.2 5 L7.8 5.7 V12.3 L6.2 13 L2.6 9.9 L1.3 11 L0.5 10.6 V7.4 L1.3 7 L2.6 8.1 Z M6.3 7.2 L4.2 9 L6.3 10.8 Z" fill="#a97de8" fill-rule="evenodd"/></svg>
<span class="t" style="left:34px;top:73px"><span class="cj" style="width:48px">解决方案</span>"AtmbExtDemo"(1 <span class="cj" style="width:36px">个项目</span>/<span class="cj" style="width:12px">共</span> 1 <span class="cj" style="width:12px">个</span>)</span>
<div class="a" style="left:1px;top:90px;width:346px;height:19px;background:#007acc"></div>
<svg style="left:12px;top:97px" width="7" height="7" viewBox="0 0 7 7"><path d="M7 0 V7 H0 Z" fill="#fff"/></svg>
<svg style="left:31px;top:93px" width="16" height="14" viewBox="0 0 16 14"><rect x="0.5" y="0.5" width="15" height="13" fill="#2b2b2e" stroke="#8fd18f" stroke-width="1"/><text x="8" y="10.4" font-family="Liberation Sans" font-size="9.5" font-weight="bold" fill="#f1f1f1" text-anchor="middle" letter-spacing="-0.5">C#</text></svg>
<span class="t" style="left:52px;top:92px;color:#fff;font-weight:bold;letter-spacing:-0.05px">AtmbExtDemo</span>
<svg style="left:30px;top:113px" width="6" height="10" viewBox="0 0 6 10"><path d="M0.6 0.9 L5.2 5 L0.6 9.1 Z" fill="none" stroke="#f1f1f1" stroke-width="1"/></svg>
<svg style="left:50px;top:113px" width="15" height="10" viewBox="0 0 15 10"><g fill="#d0d0d0"><rect x="0" y="7" width="3" height="3"/><rect x="4" y="3.5" width="3" height="3"/><rect x="8" y="0" width="3" height="3"/><rect x="11.5" y="0" width="3.5" height="3.5"/><rect x="8" y="6" width="4" height="4"/><rect x="3.5" y="0.5" width="2" height="2"/><rect x="4.5" y="7.5" width="2" height="2"/></g></svg>
<span class="t" style="left:70px;top:110px">依赖项</span>
<svg style="left:30px;top:131px" width="6" height="10" viewBox="0 0 6 10"><path d="M0.6 0.9 L5.2 5 L0.6 9.1 Z" fill="none" stroke="#f1f1f1" stroke-width="1"/></svg>
<span class="t" style="left:51px;top:129px;color:#8fd18f;font-weight:bold;font-size:10.5px;letter-spacing:-0.6px">C#</span>
<span class="t" style="left:70px;top:128px;letter-spacing:-0.65px">Class1.cs</span>
<!-- bottom tabs -->
<div class="a" style="left:0;top:328px;width:120px;height:21px;background:#252526;border:1px solid #3f3f46;border-top:0"></div>
<span class="t" style="left:6px;top:330px;color:#0e97fb">解决方案资源管理器</span>
<span class="t" style="left:126px;top:330px">团队资源管理器</span>
</div>

<!-- ===== PROPERTIES ===== -->
<div id="props" class="a" style="left:692px;top:428px;width:348px;height:255px">
<div class="a" style="left:0;top:0;width:348px;height:255px;background:#252526;border:1px solid #3f3f46"></div>
<!-- title -->
<div class="a" style="left:1px;top:1px;width:346px;height:21px;background:#2d2d30"></div>
<span class="t" style="left:5px;top:4px">属性</span>
<div class="a dotsd" style="left:37px;top:9px;width:255px;height:5px"></div>
<svg style="left:299px;top:9px" width="8" height="4" viewBox="0 0 8 4"><path d="M0 0 H8 L4 4 Z" fill="#f1f1f1"/></svg>
<svg style="left:316px;top:6px" width="7" height="11" viewBox="0 0 7 11"><path d="M1.5 0.5 H5.5 V6 H1.5 Z M4.5 0.5 V6" fill="none" stroke="#f1f1f1" stroke-width="1"/><path d="M0 6.5 H7 M3.5 6.5 V11" stroke="#f1f1f1" stroke-width="1"/></svg>
<svg style="left:331px;top:7px" width="10" height="9" viewBox="0 0 10 9"><path d="M0.5 0.5 L9.5 8.5 M9.5 0.5 L0.5 8.5" stroke="#f1f1f1" stroke-width="1.5"/></svg>
<!-- combo -->
<div class="a" style="left:1px;top:22px;width:345px;height:24px;background:#3f3f46"></div>
<span class="t" style="left:7px;top:26px;font-weight:bold;letter-spacing:-0.05px">AtmbExtDemo</span>
<span class="t" style="left:96px;top:26px;font-size:13px">项目属性</span>
<svg style="left:337px;top:33px" width="6" height="3" viewBox="0 0 6 3"><path d="M0 0 H6 L3 3 Z" fill="#f1f1f1"/></svg>
<!-- toolbar -->
<div class="a" style="left:4px;top:48px;width:23px;height:22px;background:#1f1f21;border:1px solid #3399ff"></div>
<svg style="left:8px;top:52px" width="15" height="14" viewBox="0 0 15 14"><rect x="0.5" y="0.5" width="5" height="5" fill="none" stroke="#f1f1f1" stroke-width="1"/><path d="M1.8 3 H4.2 M3 1.8 V4.2" stroke="#f1f1f1" stroke-width="1"/><rect x="0.5" y="8.5" width="5" height="5" fill="none" stroke="#f1f1f1" stroke-width="1"/><path d="M1.8 11 H4.2 M3 9.8 V12.2" stroke="#f1f1f1" stroke-width="1"/><path d="M7 1.5 H13 M7 3.5 H15 M7 5.5 H13 M7 9.5 H13 M7 11.5 H12 M7 13.5 H15" stroke="#f1f1f1" stroke-width="1" stroke-dasharray="5 1 2 8"/></svg>
<svg style="left:31px;top:52px" width="15" height="14" viewBox="0 0 15 14"><rect x="0" y="0" width="7" height="6.5" fill="#d0d0d0"/><text x="3.5" y="5.6" font-family="Liberation Sans" font-size="6.5" font-weight="bold" fill="#252526" text-anchor="middle">A</text><text x="3.5" y="13.6" font-family="Liberation Sans" font-size="8" font-weight="bold" fill="#d0d0d0" text-anchor="middle">Z</text><path d="M11 1 V11.5 M8 8.5 L11 12 L14 8.5" fill="none" stroke="#55c2ff" stroke-width="1.8"/></svg>
<div class="a" style="left:53px;top:50px;width:1px;height:20px;background:#3f3f46"></div>
<svg style="left:58px;top:50px" width="18" height="18" viewBox="0 0 18 18"><path d="M10 8 L2.2 15.8" stroke="#7a7a7a" stroke-width="3.6"/><path d="M1 14 L4 17 M3.2 11.8 L6.2 14.8" stroke="#252526" stroke-width="0.9"/><path d="M12.6 0.8 A4.6 4.6 0 1 1 12.5 10 A4.6 4.6 0 1 1 12.6 0.8 Z M13.9 2.6 A1.5 1.5 0 1 0 14 5.6 A1.5 1.5 0 1 0 13.9 2.6 Z" fill="#7a7a7a" fill-rule="evenodd"/></svg>
<!-- grid -->
<svg style="left:4px;top:78px" width="9" height="9" viewBox="0 0 9 9"><rect x="0.5" y="0.5" width="8" height="8" fill="none" stroke="#f1f1f1" stroke-width="1"/><path d="M2.5 4.5 H6.5" stroke="#f1f1f1" stroke-width="1"/></svg>
<span class="t" style="left:20px;top:75px;font-weight:bold;letter-spacing:-0.45px">Misc</span>
<div class="a" style="left:17px;top:93px;width:151px;height:17px;background:#2b2b2e"></div>
<div class="a" style="left:169px;top:93px;width:177px;height:17px;background:#2b2b2e"></div>
<div class="a" style="left:17px;top:112px;width:151px;height:17px;background:#2b2b2e"></div>
<div class="a" style="left:169px;top:112px;width:177px;height:17px;background:#2b2b2e"></div>
<div class="a" style="left:17px;top:131px;width:151px;height:17px;background:#2b2b2e"></div>
<div class="a" style="left:169px;top:131px;width:177px;height:17px;background:#2b2b2e"></div>
<span class="t" style="left:20px;top:94px;color:#999;font-size:13px">完整路径</span>
<span class="t" style="left:20px;top:113px;color:#999;font-size:13px">文件名</span>
<span class="t" style="left:20px;top:132px;color:#999;font-size:13px">项目文件夹</span>
<div class="a" style="left:172px;top:93px;width:174px;height:55px;overflow:hidden">
<span class="t" style="left:0;top:1px;color:#999;letter-spacing:-0.1px">C:\Users\zsh24\source\repos\AtmbExtDemo</span>
<span class="t" style="left:0;top:20px;color:#999;letter-spacing:-0.1px">AtmbExtDemo.csproj</span>
<span class="t" style="left:0;top:39px;color:#999;letter-spacing:-0.1px">C:\Users\zsh24\source\repos\AtmbExtDemo</span>
</div>
<div class="a" style="left:346px;top:74px;width:1px;height:118px;background:#333337"></div>
<!-- description -->
<div class="a" style="left:1px;top:191px;width:346px;height:1px;background:#333337"></div>
<span class="t" style="left:7px;top:197px;font-weight:bold;font-size:13.5px">文件名</span>
<span class="t" style="left:7px;top:215px">项目文件的名称。</span>
</div>

<!-- ===== STATUS BAR ===== -->
<div id="status" class="a" style="left:0;top:689px;width:1046px;height:23px;background:#007acc">
<svg style="left:4px;top:7px" width="17" height="11" viewBox="0 0 17 11"><path d="M3.5 0.8 H16 L13.5 10.2 H1 Z" fill="none" stroke="#fff" stroke-width="1.4"/></svg>
<span class="t" style="left:28px;top:4px;color:#fff">就绪</span>
<svg style="left:841px;top:8px" width="9" height="10" viewBox="0 0 9 10"><path d="M4.5 10 V1.5 M0.8 5 L4.5 1 L8.2 5" fill="none" stroke="#fff" stroke-width="1.5"/></svg>
<span class="t" style="left:859px;top:4px;color:#fff">添加到源代码管理</span>
<svg style="left:962px;top:10px" width="7" height="4" viewBox="0 0 7 4"><path d="M0 4 H7 L3.5 0 Z" fill="#fff"/></svg>
<svg style="left:990px;top:5px" width="13" height="13" viewBox="0 0 13 13"><path d="M6.5 0.5 Q10.5 0.5 10.5 5 V8 L12.5 10.5 H0.5 L2.5 8 V5 Q2.5 0.5 6.5 0.5 Z" fill="#cfe3f3"/><path d="M5 11.5 Q6.5 13.5 8 11.5 Z" fill="#cfe3f3"/></svg>
<svg style="left:998px;top:9px" width="12" height="12" viewBox="0 0 12 12"><circle cx="6" cy="6" r="5.9" fill="#e51400"/><text x="6" y="9.3" font-family="Liberation Sans" font-size="9" font-weight="bold" fill="#fff" text-anchor="middle">4</text></svg>
<svg style="left:1033px;top:12px" width="8" height="8" viewBox="0 0 8 8"><g fill="#7ab8e3"><rect x="6" y="0" width="1.2" height="1.2"/><rect x="4" y="2" width="1.2" height="1.2"/><rect x="6" y="2" width="1.2" height="1.2"/><rect x="2" y="4" width="1.2" height="1.2"/><rect x="4" y="4" width="1.2" height="1.2"/><rect x="6" y="4" width="1.2" height="1.2"/><rect x="0" y="6" width="1.2" height="1.2"/><rect x="2" y="6" width="1.2" height="1.2"/><rect x="4" y="6" width="1.2" height="1.2"/><rect x="6" y="6" width="1.2" height="1.2"/></g></svg>
</div>

</body>
</html>
